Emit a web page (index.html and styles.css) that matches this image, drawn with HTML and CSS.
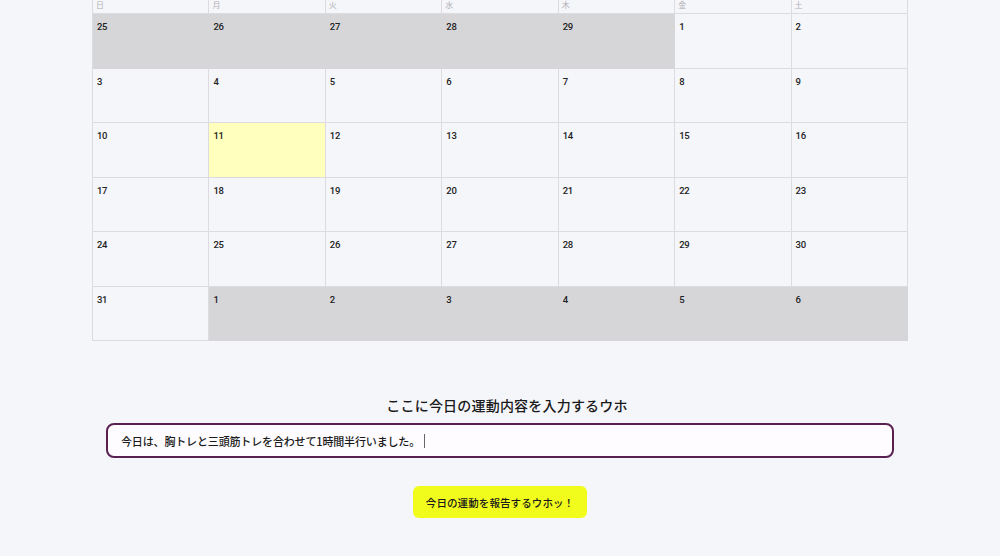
FILE: index.html
```html
<!DOCTYPE html>
<html lang="ja">
<head>
    <meta charset="UTF-8">
    <meta name="viewport" content="width=device-width, initial-scale=1.0">
    <title>運動カレンダー</title>
    <link rel="stylesheet" href="styles.css">
</head>
<body>
    <div class="calendar">
        <div class="head">日</div>
        <div class="head">月</div>
        <div class="head">火</div>
        <div class="head">水</div>
        <div class="head">木</div>
        <div class="head">金</div>
        <div class="head">土</div>

        <div class="day other">25</div>
        <div class="day other">26</div>
        <div class="day other">27</div>
        <div class="day other">28</div>
        <div class="day other">29</div>
        <div class="day">1</div>
        <div class="day">2</div>

        <div class="day">3</div>
        <div class="day">4</div>
        <div class="day">5</div>
        <div class="day">6</div>
        <div class="day">7</div>
        <div class="day">8</div>
        <div class="day">9</div>

        <div class="day">10</div>
        <div class="day today">11</div>
        <div class="day">12</div>
        <div class="day">13</div>
        <div class="day">14</div>
        <div class="day">15</div>
        <div class="day">16</div>

        <div class="day">17</div>
        <div class="day">18</div>
        <div class="day">19</div>
        <div class="day">20</div>
        <div class="day">21</div>
        <div class="day">22</div>
        <div class="day">23</div>

        <div class="day">24</div>
        <div class="day">25</div>
        <div class="day">26</div>
        <div class="day">27</div>
        <div class="day">28</div>
        <div class="day">29</div>
        <div class="day">30</div>

        <div class="day">31</div>
        <div class="day other">1</div>
        <div class="day other">2</div>
        <div class="day other">3</div>
        <div class="day other">4</div>
        <div class="day other">5</div>
        <div class="day other">6</div>
    </div>

    <form class="report">
        <label class="report-label" for="memo">ここに今日の運動内容を入力するウホ</label>
        <div class="memo" id="memo" role="textbox">今日は、胸トレと三頭筋トレを合わせて1時間半行いました。<span class="caret"></span></div>
        <button type="submit">今日の運動を報告するウホッ！</button>
    </form>
</body>
</html>
```

FILE: styles.css
```css
html, body {
    height: 100%;
    overflow: hidden;
}

body {
    margin: 0;
    background-color: #f5f6fa;
    font-family: Roboto, "Noto Sans CJK JP", sans-serif;
    color: #222;
}

.calendar {
    width: 816px;
    margin: 0 auto;
    display: grid;
    grid-template-columns: repeat(7, 1fr);
    border-left: 1px solid #dcdce0;
    box-sizing: border-box;
}

.head {
    height: 14px;
    padding: 0 3px;
    box-sizing: border-box;
    font-size: 8px;
    line-height: 10px;
    color: #b0b0b4;
    font-family: "Noto Sans CJK JP", sans-serif;
    border-right: 1px solid #dcdce0;
    border-bottom: 1px solid #dcdce0;
}

.day {
    height: 54.5px;
    padding: 7px 4px 0;
    box-sizing: border-box;
    font-size: 9.5px;
    font-weight: 500;
    line-height: 12px;
    letter-spacing: -0.3px;
    color: #222;
    border-right: 1px solid #dcdce0;
    border-bottom: 1px solid #dcdce0;
}

.day.other {
    background-color: #d6d6d8;
    border-right-color: #d6d6d8;
    border-bottom-color: #d6d6d8;
}

.day.today {
    background-color: #ffffbe;
}

.report {
    display: flex;
    flex-direction: column;
    align-items: center;
    margin-top: 54px;
    font-family: "Noto Sans CJK JP", sans-serif;
}

.report-label {
    font-size: 14px;
    font-weight: 500;
    line-height: 20px;
    letter-spacing: 0.2px;
    color: #1a1a1a;
    padding-left: 14px;
}

.memo {
    width: 788px;
    height: 35px;
    margin-top: 8px;
    padding: 0 13px;
    box-sizing: border-box;
    display: flex;
    align-items: center;
    background-color: #fefcfe;
    border: 2px solid #5a2050;
    border-radius: 8px;
    font-size: 11px;
    font-weight: 500;
    letter-spacing: -0.15px;
    color: #1a1a1a;
}

.caret {
    display: inline-block;
    width: 1px;
    height: 14px;
    margin-left: 4px;
    background-color: #666;
}

button {
    margin-top: 28px;
    width: 174px;
    height: 32px;
    border: none;
    border-radius: 6px;
    background-color: #f2fc1c;
    font-family: "Noto Sans CJK JP", sans-serif;
    font-size: 10.5px;
    font-weight: 500;
    letter-spacing: 0.1px;
    color: #1a1a1a;
    cursor: pointer;
}
```
